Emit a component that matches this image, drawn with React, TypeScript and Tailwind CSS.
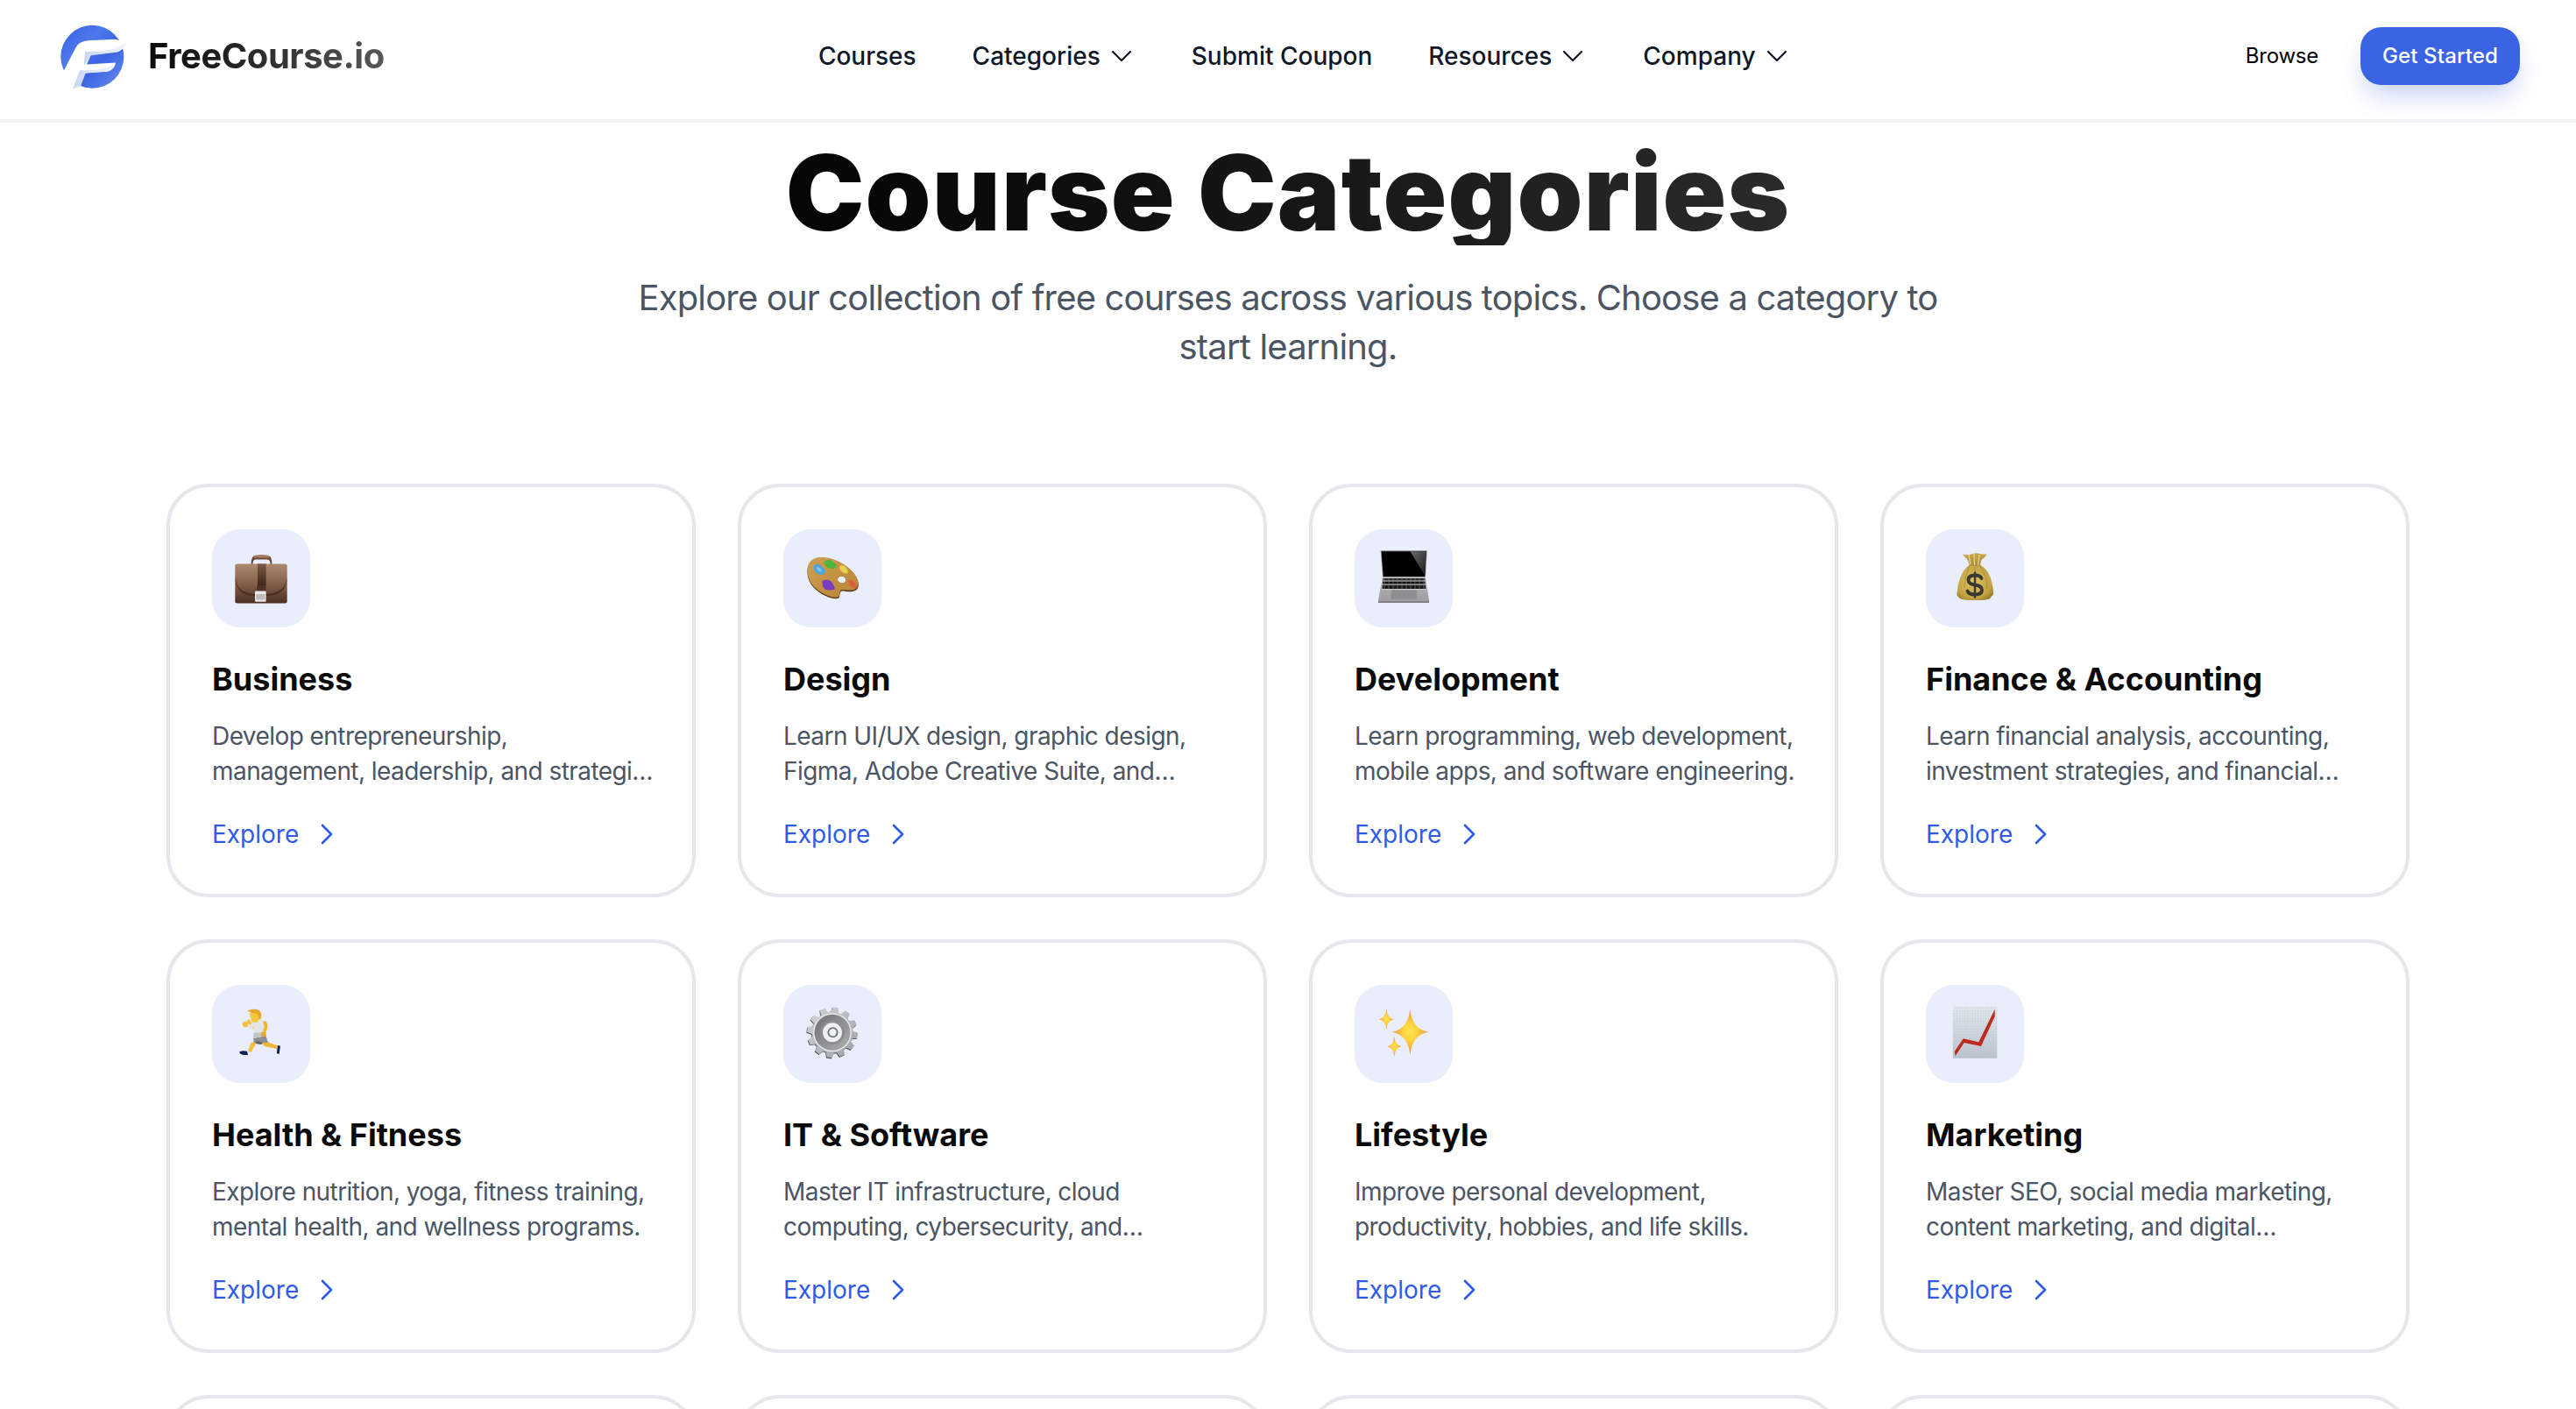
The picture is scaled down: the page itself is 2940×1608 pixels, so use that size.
import React from "react";

const ChevronRight = () => (
  <svg className="ml-4 w-8 h-8" viewBox="0 0 24 24" fill="none" stroke="currentColor" strokeWidth={2} strokeLinecap="round" strokeLinejoin="round">
    <path d="M8.25 4.5l7.5 7.5-7.5 7.5" />
  </svg>
);
const ChevronDown = () => (
  <svg className="ml-2 w-8 h-8" viewBox="0 0 24 24" fill="none" stroke="currentColor" strokeWidth={1.7} strokeLinecap="round" strokeLinejoin="round">
    <path d="M19.5 8.25l-7.5 7.5-7.5-7.5" />
  </svg>
);

const Logo = () => (
  <svg className="ml-[3px] shrink-0" width="80" height="77" viewBox="200 80 240 230">
    <defs>
      <linearGradient id="lg1" x1="0" y1="0" x2="1" y2="1">
        <stop offset="0" stopColor="#3560e6" />
        <stop offset="0.35" stopColor="#4f78ec" />
        <stop offset="0.6" stopColor="#3a63e5" />
        <stop offset="0.88" stopColor="#5b82ea" />
        <stop offset="1" stopColor="#3a63e5" />
      </linearGradient>
      <linearGradient id="lg2" x1="0" y1="0" x2="1" y2="0">
        <stop offset="0" stopColor="#c9d6f4" />
        <stop offset="1" stopColor="#f2f5fd" />
      </linearGradient>
    </defs>
    <circle cx="315" cy="196" r="108" fill="url(#lg1)" />
    <path d="M215 248 L258 165 Q268 143 300 140 L395 136 L432 148 Q420 175 400 178 L310 190 L296 222 L395 216 Q392 238 368 246 L288 252 L272 262 L262 305 L248 305 Z" fill="#fff" />
    <path d="M290 178 Q360 180 400 165 L432 148 Q420 175 400 180 L306 192 L292 222 L286 222 Z" fill="url(#lg2)" />
    <path d="M272 242 Q340 246 392 222 Q388 240 366 247 L292 252 L275 296 L248 305 Q262 270 272 242 Z" fill="url(#lg2)" />
  </svg>
);

const Briefcase = () => (
  <svg width="72" height="72" viewBox="0 0 72 72">
    <defs>
      <linearGradient id="bc1" x1="0" y1="0" x2="0" y2="1">
        <stop offset="0" stopColor="#ab8a70" />
        <stop offset="0.5" stopColor="#84604a" />
        <stop offset="1" stopColor="#4b3023" />
      </linearGradient>
      <linearGradient id="bc2" x1="0" y1="0" x2="0" y2="1">
        <stop offset="0" stopColor="#7b5a45" />
        <stop offset="1" stopColor="#3d2619" />
      </linearGradient>
    </defs>
    <path d="M24.5 20 Q24.5 11 29 10 L44 10 Q48.5 11 48.5 20 L46.5 20 Q46.5 14.5 43 14.5 L30 14.5 Q26.5 14.5 26.5 20 Z" fill="#6e4c38" />
    <path d="M28 10 Q36 8 45 10 L45 12.5 L28 12.5 Z" fill="#a47d62" />
    <rect x="6.3" y="19.4" width="59.4" height="45" rx="2.5" fill="url(#bc1)" />
    <path d="M6.5 36 Q9 53 29 54 L42 54 Q63 53 65.5 36 L65.5 38 Q63 56 42 56 L29 56 Q9 56 6.5 38 Z" fill="#4a2e20" />
    <rect x="32" y="19.4" width="9.6" height="25" fill="url(#bc2)" />
    <rect x="30.8" y="44" width="10.6" height="8" rx="2" fill="#4f3224" />
    <rect x="29" y="50.4" width="12.6" height="12.4" rx="1" fill="#e8e8e6" />
    <rect x="30.4" y="54" width="9.8" height="6.5" fill="#bdbdb9" />
  </svg>
);

const Palette = () => (
  <svg width="72" height="72" viewBox="0 0 72 72">
    <defs>
      <linearGradient id="pa1" x1="0" y1="0" x2="1" y2="1">
        <stop offset="0" stopColor="#cfa050" />
        <stop offset="1" stopColor="#b98334" />
      </linearGradient>
    </defs>
    <path fillRule="evenodd" d="M22 12.5 C34 12 50 18 60 30 C66 37 68 46 63 49.5 C58 53 50 50 47 50.5 C43 51.5 46 58 42 59 C36 60 24 56 15 47 C9 41 6 31 8 23 C10 16 15 13 22 12.5 Z M46.3 33.5 C43.5 33.5 41.5 36 42 38 C42.5 41 47 42.5 49.5 41 C52 39.5 51.5 36.5 50 35 C49 34 47.5 33.5 46.3 33.5 Z" fill="#5a3d18" />
    <path fillRule="evenodd" d="M22 12 C34 11.5 50 17.5 60 29.5 C66 36.5 67 45 62.5 48 C58 51 50 48.5 47 49 C43 50 45.5 56.5 42 57.5 C36 58.5 24 54.5 15 45.5 C9 39.5 6.5 30 8 23 C9.5 16 15 12.5 22 12 Z M46.3 33.5 C43.5 33.5 41.5 36 42 38 C42.5 41 47 42.5 49.5 41 C52 39.5 51.5 36.5 50 35 C49 34 47.5 33.5 46.3 33.5 Z" fill="url(#pa1)" />
    <path d="M14.5 21.5 Q18 18.5 22 21 L27.5 26 Q29 31 24 32 Q19 32 16 28 Q14 25 14.5 21.5 Z" fill="#4aa6e0" />
    <path d="M18 23.5 Q21 22.5 24 26 Q24.5 29 21.5 28.5 Q18 26.5 18 23.5 Z" fill="#7cc6ee" />
    <path d="M26.5 17.5 Q30 13.5 36 16 Q41 20 40 24 Q35 26 30 23.5 Q26.5 21 26.5 17.5 Z" fill="#4cb63e" />
    <path d="M44 22 Q48 20 51 23 Q54.5 27 53.5 30.5 Q49 31 46 28 Q44 25 44 22 Z" fill="#e6d14a" />
    <path d="M54.5 37.5 Q58 37 61 40.5 Q64 44 63 47 Q58.5 47 56 43.5 Q54 40 54.5 37.5 Z" fill="#dd5b3e" />
    <path d="M24.5 39 Q29 36.5 34 39 Q38 43 39 48.5 Q33 50 28 49 Q24 46.5 24.5 39 Z" fill="#7a3ec1" />
  </svg>
);

const Laptop = () => (
  <svg width="72" height="72" viewBox="0 0 72 72">
    <defs>
      <linearGradient id="la1" x1="0" y1="0" x2="0" y2="1">
        <stop offset="0" stopColor="#b9b9ba" />
        <stop offset="1" stopColor="#9c9c9e" />
      </linearGradient>
      <linearGradient id="la2" x1="0" y1="0" x2="1" y2="1">
        <stop offset="0" stopColor="#6a6a6a" />
        <stop offset="1" stopColor="#1c1c1c" />
      </linearGradient>
    </defs>
    <path d="M9.7 4.3 H62.7 L61 34.8 H12 Z" fill="#8b8d90" />
    <path d="M10.6 5.3 H61.8 L60 34.4 H12.8 Z" fill="#000" />
    <path d="M43.5 5.3 H61.8 L60.4 33 Z" fill="url(#la2)" />
    <path d="M12 34.3 H60.8 L65.2 62 Q65.2 63.6 63.5 63.6 H8.4 Q6.6 63.6 6.8 62 Z" fill="url(#la1)" />
    <path d="M12.2 35.4 H60.6 L61.8 49 H11 Z" fill="#d1d1d2" />
    <rect x="12.4" y="36" width="48" height="2.5" fill="#2a2a2c" />
    <rect x="12" y="39.5" width="48.6" height="3" fill="#111" />
    <rect x="11.6" y="43.6" width="49.6" height="4.4" fill="#1a1a1c" />
    <path d="M14 35.5 V48.5 M19 35.5 V48.5 M24 35.5 V48.5 M29 35.5 V48.5 M34 35.5 V48.5 M39 35.5 V48.5 M44 35.5 V48.5 M49 35.5 V48.5 M54 35.5 V48.5 M59 35.5 V48.5" stroke="#8a8a8c" strokeWidth="0.6" />
    <path d="M22 49.5 H50.8 L51.5 60.3 H21.4 Z" fill="#8e8e90" />
    <path d="M7 62.4 H65 L65 63.8 H7 Z" fill="#6a6a6c" />
  </svg>
);

const MoneyBag = () => (
  <svg width="72" height="72" viewBox="0 0 72 72">
    <defs>
      <linearGradient id="mb1" x1="0" y1="0" x2="0" y2="1">
        <stop offset="0" stopColor="#c9a94e" />
        <stop offset="1" stopColor="#a88a34" />
      </linearGradient>
      <radialGradient id="mb2" cx="0.45" cy="0.45" r="0.7">
        <stop offset="0" stopColor="#dcc064" />
        <stop offset="0.7" stopColor="#c3a342" />
        <stop offset="1" stopColor="#8e7226" />
      </radialGradient>
    </defs>
    <path d="M22 8.5 Q28 10 32 8.5 Q37 6.5 42 8 Q48 9 50 8 Q47 13 43.5 15 Q42 19 42 22 L30 22 Q29 17 27 14 Q24 11.5 22 8.5 Z" fill="url(#mb1)" />
    <path d="M29 9 L31 20 M35 8 L35.5 21 M41 9 L39.5 21" stroke="#e9d9a0" strokeWidth="1.2" fill="none" />
    <path d="M29.5 21 Q36 23 42.5 21 Q50 25 54 36 Q57 47 57 53 Q57 56 55 56.5 Q54 60.5 44 61 L29 61 Q18 60.5 17 57 Q15 56.5 15.5 53 Q16 44 19 36 Q23 25 29.5 21 Z" fill="url(#mb2)" />
    <path d="M30 22 Q24 34 24 46 M42 22 Q50 34 50 48 M36 23 V30" stroke="#a98c33" strokeWidth="0.9" fill="none" />
    <path d="M43.5 36 Q42 32.5 36 32.5 Q28.5 32.5 28.5 38 Q28.5 42.5 36 43.5 Q44 44.5 44 49.5 Q44 54.5 36 54.5 Q29 54.5 27.5 50.5" stroke="#3a3835" strokeWidth="3.8" fill="none" strokeLinecap="round" />
    <path d="M36 29.5 V57.5" stroke="#3a3835" strokeWidth="2.4" strokeLinecap="round" />
  </svg>
);

const Runner = () => (
  <svg width="72" height="72" viewBox="0 0 72 72">
    <path d="M33 43 L24.5 46 L21 55.5 L24.5 57 L30 47.5 Z" fill="#f5bf3c" />
    <path d="M40 40 L43 45 L55 49.5 L54 53 L40 50 L35 45 Z" fill="#f0b432" />
    <path d="M27 41 L41.5 38 L44 46 L38 46 L36 48 L28 46 Z" fill="#8a8d91" />
    <path d="M30 47 L36 48 L38 46 L31 44 Z" fill="#5f6165" />
    <path d="M11.3 56.3 Q15 54.5 20 55.8 L21 60 Q15 60.5 12 58.5 Z" fill="#10204f" />
    <path d="M55 49 L58 49.8 L56.5 59 L53.8 58 Z" fill="#10204f" />
    <path d="M21.5 21 L27 28.5" stroke="#f5bf3c" strokeWidth="3.4" strokeLinecap="round" />
    <circle cx="18" cy="25" r="3.3" fill="#f5bf3c" />
    <path d="M21 27 L28 22 Q34 19 40 21 L42 27 L41 38 L27 41 Q27 32 28 28 L24 31 Z" fill="#e3e4e6" />
    <path d="M28 34 Q32 36 41 33 L41.5 38 L27 41 Z" fill="#c3c5c8" />
    <path d="M41 21 Q44 24 43 30 L40.5 36.5 L37.5 35.5 L39.5 28 Q39 24 38 22 Z" fill="#f0b432" />
    <circle cx="38.8" cy="36.4" r="2.8" fill="#e9a92c" />
    <path d="M22.5 13 Q27 8.5 32.5 10 Q36 12.5 34.5 19 L31 23 L26 22.5 Q24 20 24 16 Z" fill="#f7c63f" />
    <path d="M20 9.5 Q27 6.5 33 8.5 Q38 12 35.5 19 L33.5 19 Q33.5 14 30 12.5 Q25 12 20 9.5 Z" fill="#e5a82b" />
  </svg>
);

const gearPath = (() => {
  const cx = 36, cy = 34.3, n = 12, ro = 29, ri = 23.5;
  const pts: string[] = [];
  for (let i = 0; i < n; i++) {
    const a = (i / n) * Math.PI * 2 + 0.12;
    const s = (Math.PI * 2) / n;
    const p = (ang: number, r: number) => `${(cx + r * Math.cos(ang)).toFixed(2)} ${(cy + r * Math.sin(ang)).toFixed(2)}`;
    pts.push(`${i === 0 ? "M" : "L"}${p(a - s * 0.2, ro)}`);
    pts.push(`L${p(a + s * 0.2, ro)}`);
    pts.push(`L${p(a + s * 0.36, ri)}`);
    pts.push(`L${p(a + s * 0.64, ri)}`);
  }
  return pts.join(" ") + " Z";
})();

const Gear = () => (
  <svg width="72" height="72" viewBox="0 0 72 72">
    <defs>
      <linearGradient id="ge1" x1="0" y1="0" x2="1" y2="1">
        <stop offset="0" stopColor="#d3d7da" />
        <stop offset="1" stopColor="#9ba0a4" />
      </linearGradient>
      <linearGradient id="ge2" x1="0" y1="0" x2="1" y2="1">
        <stop offset="0" stopColor="#6d6f72" />
        <stop offset="1" stopColor="#aeb1b4" />
      </linearGradient>
    </defs>
    <path d={gearPath} fill="#4b4a47" transform="translate(-0.6 0.9)" />
    <path d={gearPath} fill="url(#ge1)" />
    <circle cx="36" cy="34.3" r="22" fill="#e6e7e8" />
    <circle cx="36" cy="34.3" r="20.5" fill="url(#ge2)" />
    <circle cx="36" cy="34.3" r="14" fill="#8b8e91" />
    <circle cx="36" cy="34.3" r="11" fill="#eef0f1" />
    <circle cx="36.5" cy="34.3" r="6" fill="#6e7276" />
    <circle cx="36.5" cy="34.3" r="4.2" fill="#eef2fb" />
  </svg>
);

const star = (x: number, y: number, rx: number, ry: number) => {
  const kx = rx * 0.12, ky = ry * 0.12;
  return `M${x} ${y - ry} Q${x + kx} ${y - ky} ${x + rx} ${y} Q${x + kx} ${y + ky} ${x} ${y + ry} Q${x - kx} ${y + ky} ${x - rx} ${y} Q${x - kx} ${y - ky} ${x} ${y - ry} Z`;
};

const Sparkles = () => (
  <svg width="72" height="72" viewBox="0 0 72 72">
    <defs>
      <radialGradient id="sp1" cx="0.5" cy="0.5" r="0.5">
        <stop offset="0" stopColor="#ffe253" />
        <stop offset="0.4" stopColor="#fdd23d" />
        <stop offset="1" stopColor="#ee9048" />
      </radialGradient>
    </defs>
    <path d={star(43.3, 33.7, 21, 26)} fill="url(#sp1)" />
    <path d={star(16.3, 19.3, 8.3, 12)} fill="url(#sp1)" />
    <path d={star(25.3, 50.3, 8, 11.5)} fill="url(#sp1)" />
  </svg>
);

const ChartUp = () => (
  <svg width="72" height="72" viewBox="0 0 72 72">
    <defs>
      <linearGradient id="ch1" x1="0" y1="0" x2="0" y2="1">
        <stop offset="0" stopColor="#e6e9ec" />
        <stop offset="1" stopColor="#bcc2c8" />
      </linearGradient>
      <pattern id="ch2" width="3" height="3" patternUnits="userSpaceOnUse">
        <path d="M3 0 H0 V3" fill="none" stroke="#b4cde6" strokeWidth="0.5" />
      </pattern>
    </defs>
    <rect x="10.7" y="4.3" width="50.6" height="59.4" fill="url(#ch1)" />
    <rect x="10.7" y="4.3" width="50.6" height="59.4" fill="url(#ch2)" />
    <path d="M12.7 56 L22.7 41.3 L40.3 45.3 L58.7 7.7 L58.7 16 L43 50 L23.7 46 L13.7 61 Z" fill="#bc2b1c" />
  </svg>
);

const cards = [
  { title: "Business", l1: "Develop entrepreneurship,", l2: "management, leadership, and strategi…", icon: <Briefcase /> },
  { title: "Design", l1: "Learn UI/UX design, graphic design,", l2: "Figma, Adobe Creative Suite, and…", icon: <Palette /> },
  { title: "Development", l1: "Learn programming, web development,", l2: "mobile apps, and software engineering.", icon: <Laptop /> },
  { title: "Finance & Accounting", l1: "Learn financial analysis, accounting,", l2: "investment strategies, and financial…", icon: <MoneyBag /> },
  { title: "Health & Fitness", l1: "Explore nutrition, yoga, fitness training,", l2: "mental health, and wellness programs.", icon: <Runner /> },
  { title: "IT & Software", l1: "Master IT infrastructure, cloud", l2: "computing, cybersecurity, and…", icon: <Gear /> },
  { title: "Lifestyle", l1: "Improve personal development,", l2: "productivity, hobbies, and life skills.", icon: <Sparkles /> },
  { title: "Marketing", l1: "Master SEO, social media marketing,", l2: "content marketing, and digital…", icon: <ChartUp /> },
];

const NavItem = ({ label, caret }: { label: string; caret?: boolean }) => (
  <a className="flex items-center text-[28px] leading-10 font-medium text-[#111827]">
    {label}
    {caret && <ChevronDown />}
  </a>
);

export default function App() {
  return (
    <div className="h-screen overflow-hidden bg-white font-['Inter',sans-serif]">
      <header className="h-[140px] bg-white border-b-4 border-[#f3f4f6] pl-16 pr-16 pb-2 flex items-center justify-between">
        <div className="flex items-center">
          <Logo />
          <span className="ml-[22px] text-[40px] leading-[56px] font-bold tracking-[-0.012em] bg-linear-to-r from-[#0a0a0a] to-[#585858] bg-clip-text text-transparent">
            FreeCourse.io
          </span>
        </div>
        <nav className="flex items-center gap-16">
          <NavItem label="Courses" />
          <NavItem label="Categories" caret />
          <NavItem label="Submit Coupon" />
          <NavItem label="Resources" caret />
          <NavItem label="Company" caret />
        </nav>
        <div className="flex items-center gap-6">
          <a className="px-6 text-2xl font-normal tracking-[-0.01em] text-black">Browse</a>
          <a className="h-[66px] w-[182px] rounded-3xl bg-[#3b64e4] flex items-center justify-center text-2xl font-medium tracking-[0.005em] text-white shadow-[0_16px_30px_-6px_rgba(59,100,228,0.3)]">
            Get Started
          </a>
        </div>
      </header>

      <main className="pt-5 px-[190px]">
        <div className="flex flex-col items-center">
          <h1 className="text-[120px] leading-none font-black tracking-[0.01em] bg-linear-to-r from-[#050505] to-[#2b2b2b] bg-clip-text text-transparent">
            Course Categories
          </h1>
          <p className="mt-8 w-[1536px] text-center text-[40px] leading-[56px] tracking-[-0.021em] text-[#4b5563]">
            Explore our collection of free courses across various topics. Choose a category to start learning.
          </p>
        </div>

        <div className="mt-32 grid grid-cols-4 gap-12">
          {cards.map((c) => (
            <div key={c.title} className="rounded-[48px] border-4 border-[#e5e7eb] bg-white p-12">
              <div className="w-28 h-28 rounded-[32px] bg-[#eaeefc] flex items-center justify-center">{c.icon}</div>
              <h3 className="mt-[31px] text-4xl leading-14 font-bold text-[#0a0a0a]">{c.title}</h3>
              <p className="mt-[17px] text-[28px] leading-10 tracking-[-0.02em] text-[#4b5563] whitespace-nowrap">
                {c.l1}
                <br />
                {c.l2}
              </p>
              <a className="mt-8 flex items-center text-[28px] leading-10 font-normal text-[#2f5be7]">
                Explore
                <ChevronRight />
              </a>
            </div>
          ))}
          <div className="h-[472px] rounded-[48px] border-4 border-[#e5e7eb] bg-white" />
          <div className="h-[472px] rounded-[48px] border-4 border-[#e5e7eb] bg-white" />
          <div className="h-[472px] rounded-[48px] border-4 border-[#e5e7eb] bg-white" />
          <div className="h-[472px] rounded-[48px] border-4 border-[#e5e7eb] bg-white" />
        </div>
      </main>
    </div>
  );
}
